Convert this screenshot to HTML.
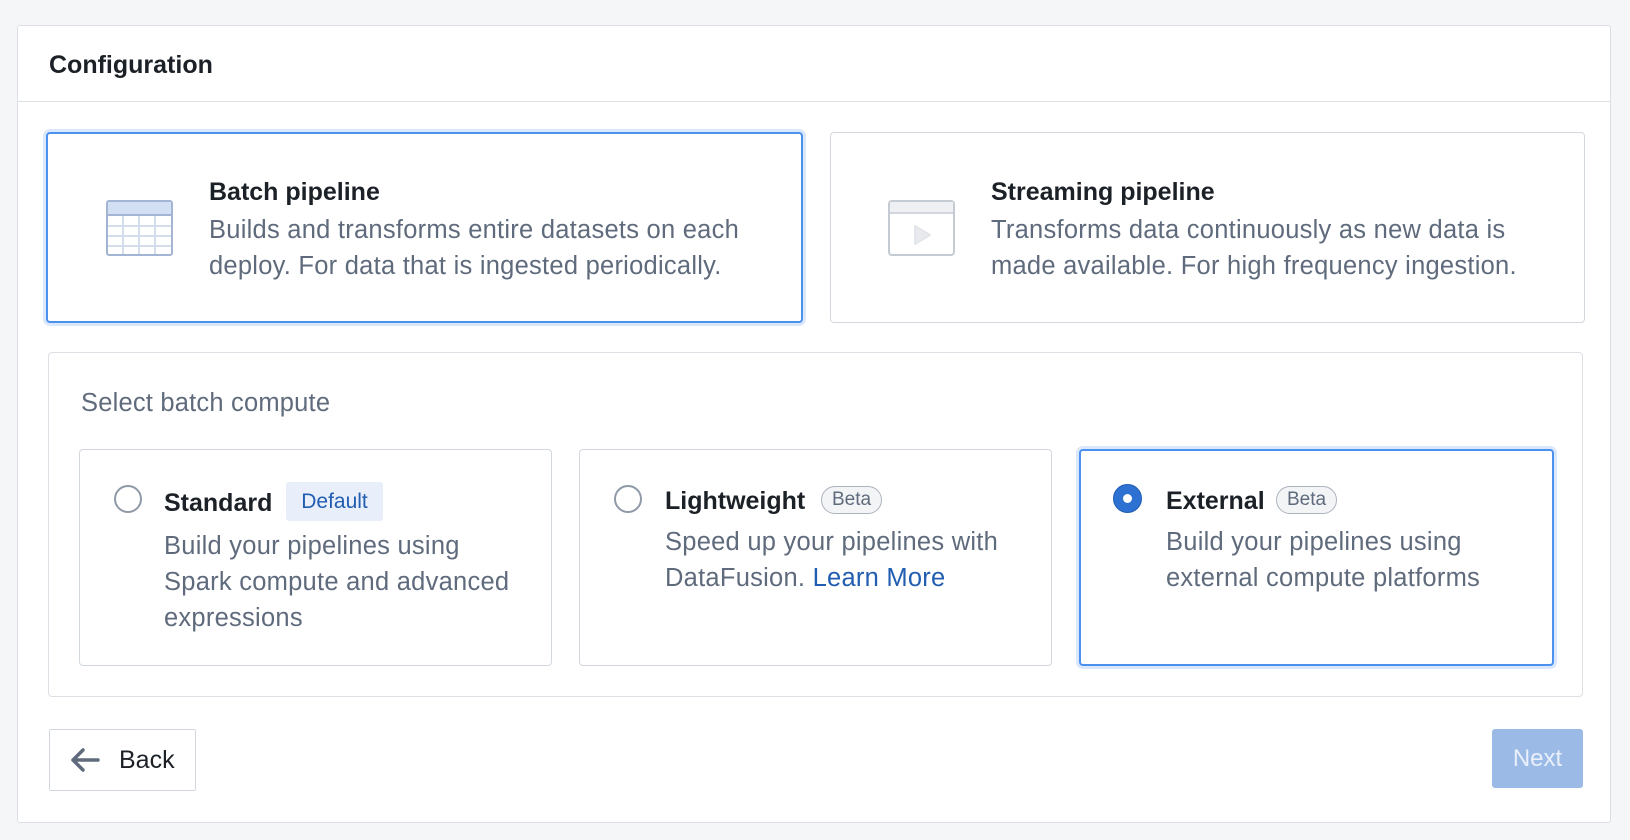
<!DOCTYPE html>
<html><head><meta charset="utf-8"><style>
*{box-sizing:border-box;margin:0;padding:0}
body{width:1630px;height:840px;background:#f5f6f8;font-family:"Liberation Sans",sans-serif;position:relative;overflow:hidden;color:#1c2127}
.abs{position:absolute}
.panel{left:17px;top:25px;width:1594px;height:798px;background:#fff;border:1px solid #dcdfe4;border-radius:3px}
.hdr{left:17px;top:101px;width:1594px;height:1px;background:#dcdfe4}
.title{left:49px;top:51px;font-size:25px;font-weight:bold}
.card{background:#fff;border:1px solid #d3d8de;border-radius:4px}
.sel{border:2px solid #4c90f0;box-shadow:0 0 0 3px #dbe8fb}
.t{font-size:25px;font-weight:bold;color:#1c2127}
.d{font-size:25.5px;letter-spacing:0.25px;color:#5f6b7c;line-height:36px}
.badge{font-size:19px;color:#5f6b7c;border:1.5px solid #abb3bf;border-radius:14px;background:#f3f4f6;padding:1px 10px;line-height:24px}
.radio{width:28px;height:28px;border-radius:50%;border:2px solid #8f99a8;background:#fff}
</style></head><body>
<div class="abs panel"></div>
<div class="abs hdr"></div>
<div class="abs title">Configuration</div>

<div class="abs card sel" style="left:46px;top:132px;width:757px;height:191px"></div>
<svg class="abs" style="left:106px;top:200px" width="67" height="56" viewBox="0 0 67 56">
<rect x="1" y="1" width="65" height="54" rx="2" fill="#fff" stroke="#a3b5d2" stroke-width="2"/>
<rect x="2" y="2" width="63" height="13" fill="#d3e0f4"/>
<line x1="1" y1="15" x2="66" y2="15" stroke="#a3b5d2" stroke-width="2"/>
<g stroke="#d3ddec" stroke-width="2"><line x1="2" y1="26" x2="65" y2="26"/><line x1="2" y1="36" x2="65" y2="36"/><line x1="2" y1="46" x2="65" y2="46"/>
<line x1="17" y1="16" x2="17" y2="54"/><line x1="33" y1="16" x2="33" y2="54"/><line x1="49" y1="16" x2="49" y2="54"/></g>
</svg>
<div class="abs t" style="left:209px;top:178px">Batch pipeline</div>
<div class="abs d" style="left:209px;top:212px">Builds and transforms entire datasets on each<br>deploy. For data that is ingested periodically.</div>

<div class="abs card" style="left:830px;top:132px;width:755px;height:191px"></div>
<svg class="abs" style="left:888px;top:200px" width="67" height="56" viewBox="0 0 67 56">
<rect x="1" y="1" width="65" height="54" rx="3" fill="#fff" stroke="#c5cbd3" stroke-width="2"/>
<rect x="2" y="2" width="63" height="11" fill="#eef0f3"/>
<line x1="1" y1="13" x2="66" y2="13" stroke="#c5cbd3" stroke-width="1.5"/>
<path d="M27 26 L27 44 L42 35 Z" fill="#e8eaee" stroke="#e2e5e9" stroke-width="2" stroke-linejoin="round"/>
</svg>
<div class="abs t" style="left:991px;top:178px">Streaming pipeline</div>
<div class="abs d" style="left:991px;top:212px">Transforms data continuously as new data is<br>made available. For high frequency ingestion.</div>

<div class="abs card" style="left:48px;top:352px;width:1535px;height:345px;border-color:#dcdfe4"></div>
<div class="abs" style="left:81px;top:389px;font-size:25.5px;letter-spacing:0.2px;color:#5f6b7c">Select batch compute</div>

<div class="abs card" style="left:79px;top:449px;width:473px;height:217px"></div>
<div class="abs radio" style="left:114px;top:485px"></div>
<div class="abs t" style="left:164px;top:489px">Standard</div>
<div class="abs" style="left:286px;top:482px;width:97px;height:39px;background:#e8effb;border-radius:3px;color:#215db0;font-size:21px;text-align:center;line-height:39px">Default</div>
<div class="abs d" style="left:164px;top:528px">Build your pipelines using<br>Spark compute and advanced<br>expressions</div>

<div class="abs card" style="left:579px;top:449px;width:473px;height:217px"></div>
<div class="abs radio" style="left:614px;top:485px"></div>
<div class="abs t" style="left:665px;top:487px">Lightweight</div>
<div class="abs badge" style="left:821px;top:486px">Beta</div>
<div class="abs d" style="left:665px;top:524px">Speed up your pipelines with<br>DataFusion. <span style="color:#215db0">Learn More</span></div>

<div class="abs card sel" style="left:1079px;top:449px;width:475px;height:217px"></div>
<div class="abs" style="left:1113px;top:484px;width:29px;height:29px;border-radius:50%;background:#2d72d2;border:1px solid #215db0"></div>
<div class="abs" style="left:1123px;top:494px;width:9px;height:9px;border-radius:50%;background:#fff"></div>
<div class="abs t" style="left:1166px;top:487px">External</div>
<div class="abs badge" style="left:1276px;top:486px">Beta</div>
<div class="abs d" style="left:1166px;top:524px">Build your pipelines using<br>external compute platforms</div>

<div class="abs" style="left:49px;top:729px;width:147px;height:62px;border:1.5px solid #d3d8de;border-radius:2px;background:#fff"></div>
<svg class="abs" style="left:70px;top:747px" width="30" height="26" viewBox="0 0 30 26"><path d="M13 3 L3 13 L13 23 M3 13 L28 13" fill="none" stroke="#5f6b7c" stroke-width="3.5" stroke-linecap="round" stroke-linejoin="round"/></svg>
<div class="abs" style="left:119px;top:746px;font-size:25px;color:#1c2127">Back</div>
<div class="abs" style="left:1492px;top:729px;width:91px;height:59px;background:#9bbbe6;border-radius:3px;color:#e9f0fa;font-size:24px;text-align:center;line-height:59px">Next</div>
</body></html>
